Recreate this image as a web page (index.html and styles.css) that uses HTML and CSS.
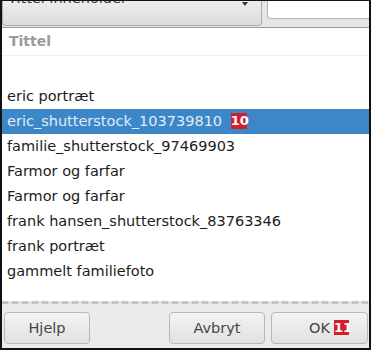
FILE: index.html
```html
<!DOCTYPE html>
<html lang="no">
  <head>
    <meta charset="UTF-8" />
    <title>Velg tittel</title>
    <link rel="stylesheet" href="styles.css">
  </head>
  <body>
    <div class="frame">
      <div class="toolbar">
        <div class="filter-select">
          <span class="filter-label">Tittel inneholder</span>
          <span class="filter-arrow"></span>
        </div>
        <div class="filter-input"></div>
      </div>
      <div class="list-header">Tittel</div>
      <div class="list">
        <div class="row">eric portræt</div>
        <div class="row selected">eric_shutterstock_103739810 <span class="badge">10</span></div>
        <div class="row">familie_shutterstock_97469903</div>
        <div class="row">Farmor og farfar</div>
        <div class="row">Farmor og farfar</div>
        <div class="row">frank hansen_shutterstock_83763346</div>
        <div class="row">frank portræt</div>
        <div class="row">gammelt familiefoto</div>
      </div>
      <div class="list-edge"></div>
      <div class="buttons">
        <button class="btn btn-help">Hjelp</button>
        <button class="btn btn-cancel">Avbryt</button>
        <button class="btn btn-ok">OK<span class="badge badge-ok">11</span></button>
      </div>
    </div>
  </body>
</html>
```

FILE: styles.css
```css
body {
  margin: 0;
  font-family: "DejaVu Sans", Verdana, sans-serif;
  background: #fff;
}
.frame {
  box-sizing: border-box;
  width: 371px;
  height: 350px;
  border-style: solid;
  border-color: #111;
  border-width: 1px 2px 2px 2px;
  display: flex;
  flex-direction: column;
  overflow: hidden;
}
.toolbar {
  height: 26px;
  flex: none;
  display: flex;
  align-items: flex-start;
  background: #e6e6e6;
  border-bottom: 1px solid #9c9c9c;
}
.filter-select {
  position: relative;
  box-sizing: border-box;
  width: 260px;
  height: 25px;
  border: 1px solid #adadad;
  border-top: none;
  border-radius: 0 0 4px 4px;
  background: linear-gradient(#ededed, #dcdcdc);
  overflow: hidden;
}
.filter-label {
  display: block;
  margin-top: -11px;
  padding-left: 5px;
  font-size: 14.5px;
  line-height: 17px;
  color: #3a3a3a;
}
.filter-arrow {
  position: absolute;
  left: 239px;
  top: 1px;
  border-left: 3px solid transparent;
  border-right: 3px solid transparent;
  border-top: 4px solid #333;
}
.filter-input {
  box-sizing: border-box;
  margin-left: 5px;
  flex: 1;
  height: 18px;
  background: #fff;
  border: 1px solid #b4b4b4;
  border-top: none;
  border-right: none;
  border-radius: 0 0 0 4px;
}
.list-header {
  height: 27px;
  flex: none;
  line-height: 27px;
  padding-left: 7px;
  font-size: 14px;
  font-weight: bold;
  color: #9b9b9b;
  border-bottom: 1px solid #efefef;
}
.list {
  height: 217px;
  flex: none;
  padding-top: 28px;
  overflow: hidden;
}
.list-edge {
  height: 3px;
  flex: none;
  background: repeating-linear-gradient(90deg, #c4c4c4 0 6px, #e2e2e2 6px 10px);
}
.row {
  height: 25px;
  line-height: 25px;
  padding-left: 5px;
  font-size: 14.5px;
  color: #1c1c1c;
  white-space: nowrap;
}
.row.selected {
  background: #3c87c7;
  color: #e2ecf6;
}
.badge {
  display: inline-block;
  width: 16px;
  height: 16px;
  margin-left: 4px;
  background: #d31f2d;
  color: #fff;
  font-size: 13px;
  font-weight: bold;
  line-height: 16px;
  text-align: center;
  vertical-align: 1px;
}
.buttons {
  flex: 1;
  display: flex;
  align-items: flex-start;
  padding: 8px 1px 0 2px;
  background: #ebebeb;
}
.btn {
  height: 32px;
  border: 1px solid #b8b8b8;
  border-radius: 4px;
  background: linear-gradient(#f3f3f3, #e1e1e1);
  font-family: "DejaVu Sans", Verdana, sans-serif;
  font-size: 14.5px;
  color: #454545;
  padding: 0;
}
.btn-help {
  width: 86px;
}
.btn-cancel {
  width: 96px;
  margin-left: auto;
}
.btn-ok {
  position: relative;
  width: 97px;
  margin-left: 6px;
}
.badge-ok {
  position: absolute;
  left: 62px;
  top: 7px;
  width: 15px;
  height: 15px;
  margin: 0;
  line-height: 15px;
}
```
